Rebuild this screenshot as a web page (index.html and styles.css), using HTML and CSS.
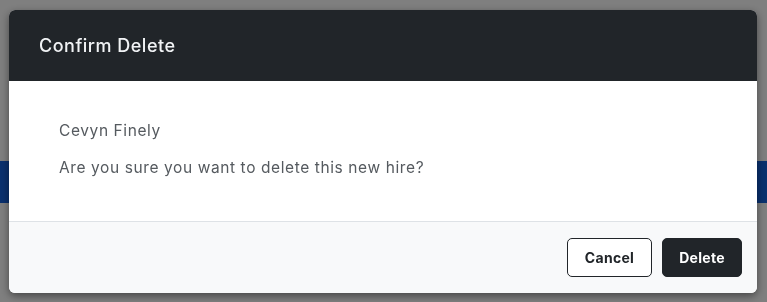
FILE: index.html
```html
<!DOCTYPE html>
<html lang="en">
<head>
    <meta charset="utf-8">
    <title>Confirm Delete</title>
    <link rel="stylesheet" href="styles.css">
</head>
<body>
    <div class="page">
        <div class="page-band"></div>
    </div>

    <div class="backdrop">
        <div class="modal" role="dialog">
            <div class="modal-header">
                <h2>Confirm Delete</h2>
            </div>
            <div class="modal-body">
                <p>Cevyn Finely</p>
                <p>Are you sure you want to delete this new hire?</p>
            </div>
            <div class="modal-footer">
                <button class="btn btn-outline">Cancel</button>
                <button class="btn btn-dark">Delete</button>
            </div>
        </div>
    </div>
</body>
</html>
```

FILE: styles.css
```css
:root {
    --dark: #212529;
    --muted: #555a5f;
    --footer-bg: #f8f9fa;
}

* {
    box-sizing: border-box;
    margin: 0;
    padding: 0;
    font-family: Inter, 'Noto Sans', sans-serif;
}

body {
    background: #fff;
}

/* Page behind the dialog */
.page {
    padding-top: 161px;
}

.page-band {
    height: 42px;
    background: #1461dc;
}

/* Modal */
.backdrop {
    position: fixed;
    inset: 0;
    background: rgba(0, 0, 0, 0.5);
    padding: 10px 10px 0 9px;
}

.modal {
    width: 748px;
    background: #fff;
    border-radius: 6px;
    overflow: hidden;
    box-shadow: 0 3px 8px rgba(0, 0, 0, 0.45);
}

.modal-header {
    height: 71px;
    background: var(--dark);
    display: flex;
    align-items: center;
    padding: 0 30px;
}

.modal-header h2 {
    color: #f1f3f5;
    font-size: 18px;
    font-weight: 500;
    letter-spacing: 0.5px;
}

.modal-body {
    height: 140px;
    padding: 39px 50px 0;
    color: var(--muted);
    font-size: 15.5px;
    line-height: 22px;
    letter-spacing: 0.6px;
}

.modal-body p + p {
    margin-top: 15px;
}

.modal-footer {
    height: 72px;
    border-top: 1px solid #dee2e6;
    background: var(--footer-bg);
    display: flex;
    align-items: center;
    justify-content: flex-end;
    gap: 10px;
    padding: 0 15px;
}

.btn {
    height: 39px;
    padding: 0;
    border-radius: 5px;
    font-size: 14px;
    font-weight: 700;
    letter-spacing: 0.3px;
    cursor: pointer;
}

.btn-outline {
    width: 85px;
    background: #fff;
    color: var(--dark);
    border: 1px solid var(--dark);
}

.btn-dark {
    width: 80px;
    background: var(--dark);
    color: #fff;
    border: 1px solid var(--dark);
}
```
